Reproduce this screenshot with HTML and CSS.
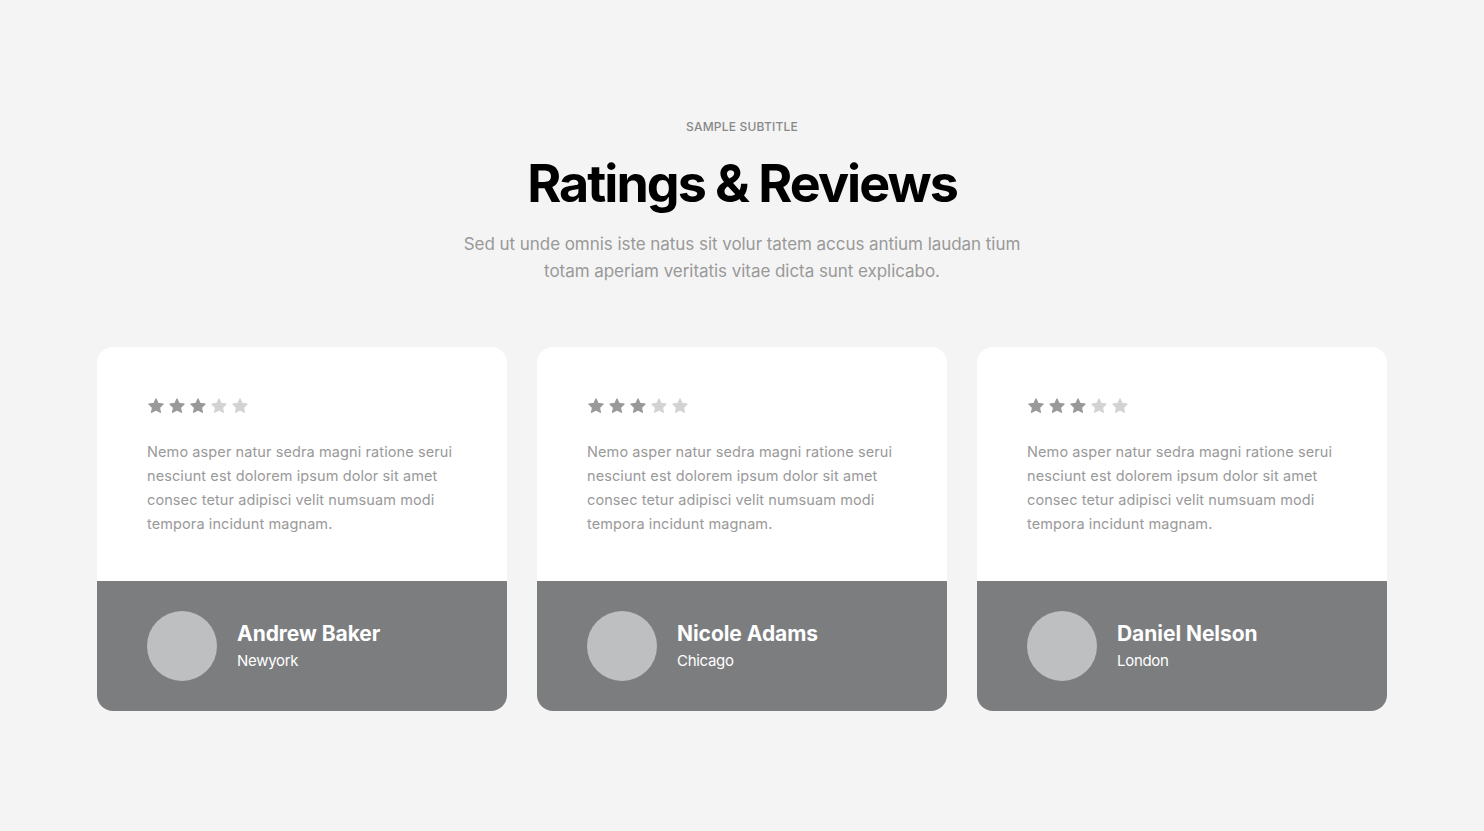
FILE: index.html
```html
<!DOCTYPE html>
<html lang="en">
<head>
<meta charset="utf-8">
<title>Ratings &amp; Reviews</title>
<link rel="stylesheet" href="styles.css">
</head>
<body>
<section class="reviews">
  <header class="head">
    <p class="subtitle">SAMPLE SUBTITLE</p>
    <h1 class="title">Ratings &amp; Reviews</h1>
    <p class="lead">Sed ut unde omnis iste natus sit volur tatem accus antium laudan tium totam aperiam veritatis vitae dicta sunt explicabo.</p>
  </header>
  <div class="cards">
    <article class="card">
      <div class="card-body">
        <div class="stars">
          <svg class="star on" viewBox="0 0 24 24"><path d="M12 2.5l2.9 6 6.6.9-4.8 4.6 1.2 6.5L12 17.4l-5.9 3.1 1.2-6.5L2.5 9.4l6.6-.9z"/></svg>
          <svg class="star on" viewBox="0 0 24 24"><path d="M12 2.5l2.9 6 6.6.9-4.8 4.6 1.2 6.5L12 17.4l-5.9 3.1 1.2-6.5L2.5 9.4l6.6-.9z"/></svg>
          <svg class="star on" viewBox="0 0 24 24"><path d="M12 2.5l2.9 6 6.6.9-4.8 4.6 1.2 6.5L12 17.4l-5.9 3.1 1.2-6.5L2.5 9.4l6.6-.9z"/></svg>
          <svg class="star" viewBox="0 0 24 24"><path d="M12 2.5l2.9 6 6.6.9-4.8 4.6 1.2 6.5L12 17.4l-5.9 3.1 1.2-6.5L2.5 9.4l6.6-.9z"/></svg>
          <svg class="star" viewBox="0 0 24 24"><path d="M12 2.5l2.9 6 6.6.9-4.8 4.6 1.2 6.5L12 17.4l-5.9 3.1 1.2-6.5L2.5 9.4l6.6-.9z"/></svg>
        </div>
        <p class="text">Nemo asper natur sedra magni ratione serui nesciunt est dolorem ipsum dolor sit amet consec tetur adipisci velit numsuam modi tempora incidunt magnam.</p>
      </div>
      <div class="card-foot">
        <div class="avatar"></div>
        <div class="who">
          <h3 class="name">Andrew Baker</h3>
          <p class="city">Newyork</p>
        </div>
      </div>
    </article>
    <article class="card">
      <div class="card-body">
        <div class="stars">
          <svg class="star on" viewBox="0 0 24 24"><path d="M12 2.5l2.9 6 6.6.9-4.8 4.6 1.2 6.5L12 17.4l-5.9 3.1 1.2-6.5L2.5 9.4l6.6-.9z"/></svg>
          <svg class="star on" viewBox="0 0 24 24"><path d="M12 2.5l2.9 6 6.6.9-4.8 4.6 1.2 6.5L12 17.4l-5.9 3.1 1.2-6.5L2.5 9.4l6.6-.9z"/></svg>
          <svg class="star on" viewBox="0 0 24 24"><path d="M12 2.5l2.9 6 6.6.9-4.8 4.6 1.2 6.5L12 17.4l-5.9 3.1 1.2-6.5L2.5 9.4l6.6-.9z"/></svg>
          <svg class="star" viewBox="0 0 24 24"><path d="M12 2.5l2.9 6 6.6.9-4.8 4.6 1.2 6.5L12 17.4l-5.9 3.1 1.2-6.5L2.5 9.4l6.6-.9z"/></svg>
          <svg class="star" viewBox="0 0 24 24"><path d="M12 2.5l2.9 6 6.6.9-4.8 4.6 1.2 6.5L12 17.4l-5.9 3.1 1.2-6.5L2.5 9.4l6.6-.9z"/></svg>
        </div>
        <p class="text">Nemo asper natur sedra magni ratione serui nesciunt est dolorem ipsum dolor sit amet consec tetur adipisci velit numsuam modi tempora incidunt magnam.</p>
      </div>
      <div class="card-foot">
        <div class="avatar"></div>
        <div class="who">
          <h3 class="name">Nicole Adams</h3>
          <p class="city">Chicago</p>
        </div>
      </div>
    </article>
    <article class="card">
      <div class="card-body">
        <div class="stars">
          <svg class="star on" viewBox="0 0 24 24"><path d="M12 2.5l2.9 6 6.6.9-4.8 4.6 1.2 6.5L12 17.4l-5.9 3.1 1.2-6.5L2.5 9.4l6.6-.9z"/></svg>
          <svg class="star on" viewBox="0 0 24 24"><path d="M12 2.5l2.9 6 6.6.9-4.8 4.6 1.2 6.5L12 17.4l-5.9 3.1 1.2-6.5L2.5 9.4l6.6-.9z"/></svg>
          <svg class="star on" viewBox="0 0 24 24"><path d="M12 2.5l2.9 6 6.6.9-4.8 4.6 1.2 6.5L12 17.4l-5.9 3.1 1.2-6.5L2.5 9.4l6.6-.9z"/></svg>
          <svg class="star" viewBox="0 0 24 24"><path d="M12 2.5l2.9 6 6.6.9-4.8 4.6 1.2 6.5L12 17.4l-5.9 3.1 1.2-6.5L2.5 9.4l6.6-.9z"/></svg>
          <svg class="star" viewBox="0 0 24 24"><path d="M12 2.5l2.9 6 6.6.9-4.8 4.6 1.2 6.5L12 17.4l-5.9 3.1 1.2-6.5L2.5 9.4l6.6-.9z"/></svg>
        </div>
        <p class="text">Nemo asper natur sedra magni ratione serui nesciunt est dolorem ipsum dolor sit amet consec tetur adipisci velit numsuam modi tempora incidunt magnam.</p>
      </div>
      <div class="card-foot">
        <div class="avatar"></div>
        <div class="who">
          <h3 class="name">Daniel Nelson</h3>
          <p class="city">London</p>
        </div>
      </div>
    </article>
  </div>
</section>
</body>
</html>
```

FILE: styles.css
```css
* { box-sizing: border-box; }
html, body { margin: 0; padding: 0; }
body {
  background: #f4f4f4;
  font-family: Inter, "Noto Sans", sans-serif;
  color: #999;
}
.reviews {
  padding: 118px 0 0;
  display: flex;
  flex-direction: column;
  align-items: center;
}
.head {
  display: flex;
  flex-direction: column;
  align-items: center;
  text-align: center;
}
.subtitle {
  margin: 0;
  font-size: 12px;
  line-height: 18px;
  color: #888;
  font-weight: 500;
  letter-spacing: 0.2px;
}
.title {
  margin: 16px 0 0;
  font-size: 52px;
  line-height: 64px;
  font-weight: 700;
  color: #000;
  letter-spacing: -2px;
}
.lead {
  margin: 15px 0 0;
  width: 580px;
  font-size: 17px;
  line-height: 27px;
  color: #999;
  letter-spacing: -0.05px;
}
.cards {
  margin-top: 62px;
  display: flex;
  gap: 30px;
}
.card {
  width: 410px;
  border-radius: 16px;
  overflow: hidden;
  background: #fff;
  display: flex;
  flex-direction: column;
}
.card-body {
  height: 234px;
  padding: 50px 50px 0;
}
.stars {
  display: flex;
  gap: 3px;
}
.star {
  width: 18px;
  height: 18px;
  fill: #d3d3d3;
  stroke: #d3d3d3;
  stroke-width: 1.5;
  stroke-linejoin: round;
}
.star.on { fill: #999; stroke: #999; }
.text {
  margin: 25px 0 0;
  font-size: 14.5px;
  line-height: 24px;
  color: #999;
  letter-spacing: 0.1px;
}
.card-foot {
  background: #7c7d7f;
  padding: 30px 50px;
  display: flex;
  align-items: center;
  gap: 20px;
}
.avatar {
  width: 70px;
  height: 70px;
  border-radius: 50%;
  background: #bebfc1;
  flex: none;
}
.who { display: flex; flex-direction: column; }
.name {
  margin: 0;
  font-size: 21px;
  line-height: 28px;
  font-weight: 700;
  color: #fff;
  letter-spacing: -0.05px;
}
.city {
  margin: 2px 0 0;
  font-size: 15px;
  line-height: 22px;
  color: #fff;
  letter-spacing: -0.3px;
}
```
